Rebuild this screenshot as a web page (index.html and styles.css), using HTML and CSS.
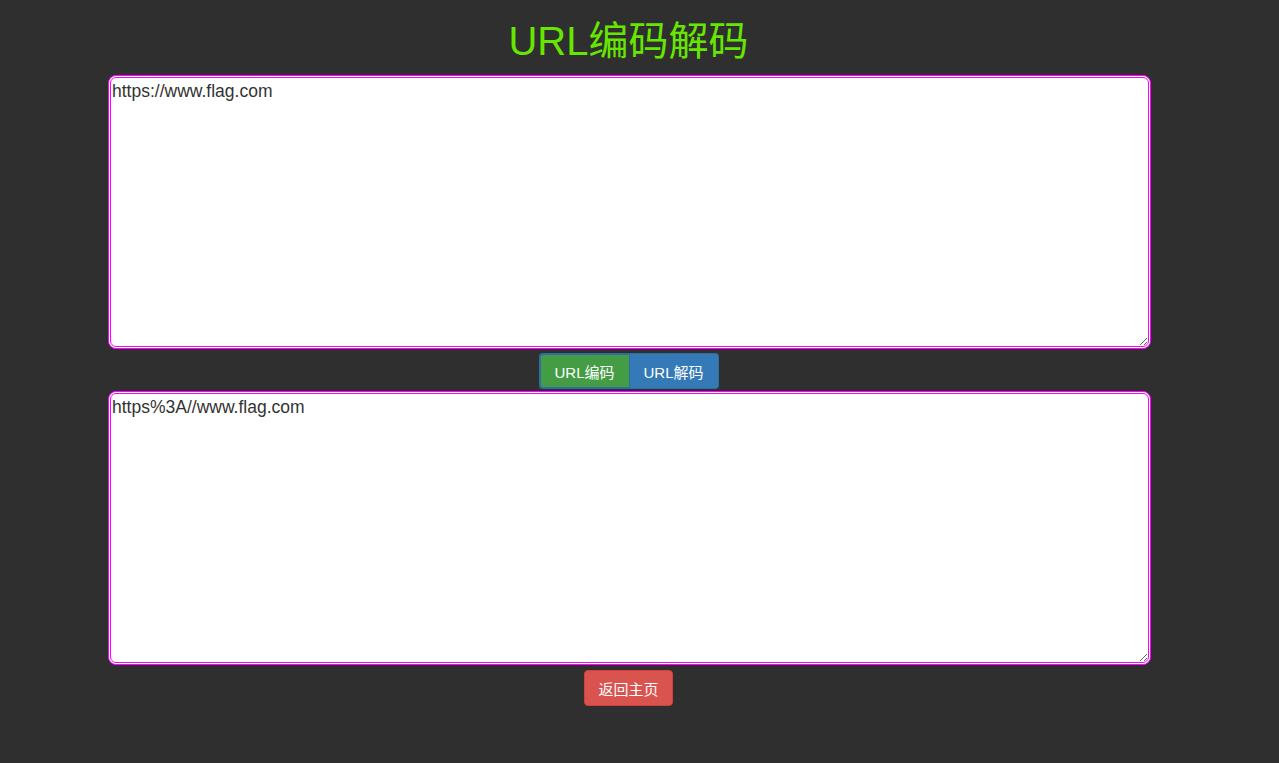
FILE: index.html
```html
<!DOCTYPE html>
<html lang="zh">
<head>
<meta charset="utf-8">
<title>URL编码解码</title>
<link rel="stylesheet" href="styles.css">
</head>
<body>
<div class="page">
  <h1 class="title">URL编码解码</h1>
  <textarea class="box box-in" spellcheck="true">https://www.flag.com</textarea>
  <div class="btn-group">
    <button class="btn btn-encode">URL编码</button>
    <button class="btn btn-decode">URL解码</button>
  </div>
  <textarea class="box box-out" spellcheck="false">https%3A//www.flag.com</textarea>
  <button class="btn btn-home">返回主页</button>
</div>
</body>
</html>
```
FILE: styles.css
```css
html, body {
  margin: 0;
  padding: 0;
  background: #2f2f2f;
  height: 100%;
}
body {
  font-family: "Liberation Sans", Arial, "Noto Sans CJK SC", sans-serif;
}
.page {
  width: 1257px;
  display: flex;
  flex-direction: column;
  align-items: center;
}
.title {
  margin: 18px 0 11px;
  font-size: 40px;
  line-height: 46px;
  font-weight: normal;
  color: #66e600;
}
.box {
  box-sizing: border-box;
  align-self: flex-start;
  width: 1043px;
  height: 274px;
  margin: 0 0 0 108px;
  padding: 3px 1px 2px;
  border: 3px double #ff00ff;
  border-radius: 8px;
  background: #fff;
  color: #333;
  font-family: "Liberation Sans", Arial, sans-serif;
  font-size: 17.5px;
  line-height: 1.15;
  resize: vertical;
  outline: none;
}
.btn-group {
  display: flex;
  margin: 4px 0 2px;
}
.btn {
  box-sizing: border-box;
  height: 36px;
  padding: 0;
  border: 1px solid transparent;
  border-radius: 4px;
  color: #fff;
  font-family: "Liberation Sans", Arial, "Noto Sans CJK SC", sans-serif;
  font-size: 15px;
  cursor: pointer;
}
.btn-encode {
  width: 91px;
  background: #449d44;
  border: 2px solid #2e6da4;
  border-right: 1px solid #2e6da4;
  border-radius: 4px 0 0 4px;
}
.btn-decode {
  width: 89px;
  background: #337ab7;
  border-color: #2e6da4;
  border-left: none;
  border-radius: 0 4px 4px 0;
}
.btn-home {
  width: 89px;
  margin-top: 5px;
  background: #d9534f;
  border-color: #d43f3a;
}
```
